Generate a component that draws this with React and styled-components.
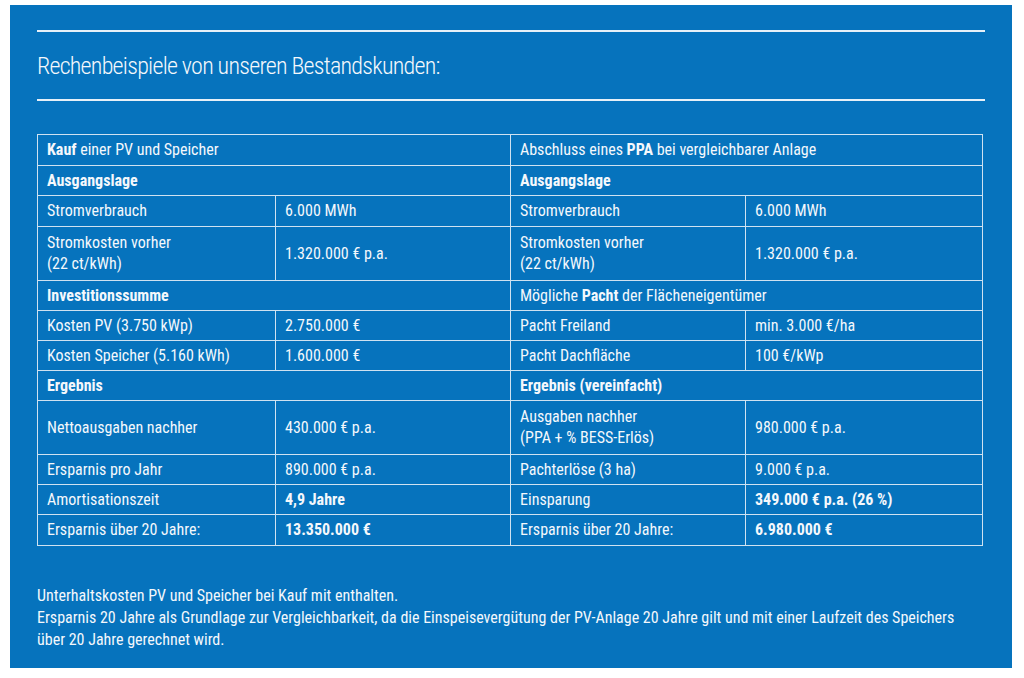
import React from 'react';
import styled, { createGlobalStyle } from 'styled-components';

const Global = createGlobalStyle`
  body {
    margin: 0;
    background: #ffffff;
    font-family: "Roboto Condensed", "Open Sans Condensed", "Noto Sans", sans-serif;
    font-stretch: condensed;
  }
`;

const Page = styled.div`
  padding: 5px 12px 10px 10px;
`;

const Panel = styled.section`
  background: #0673bd;
  color: #f4f8fc;
  height: 663px;
  box-sizing: border-box;
  padding: 25px 27px 0 27px;
`;

const Rule = styled.hr`
  margin: 0;
  border: 0;
  height: 2px;
  background: #e6f0f8;
`;

const Title = styled.h1`
  margin: 0;
  height: 67px;
  display: flex;
  align-items: center;
  font-size: 24px;
  font-weight: 300;
  letter-spacing: -0.75px;
`;

const Table = styled.table`
  margin-top: 33px;
  width: 945px;
  border-collapse: collapse;
  table-layout: fixed;
  font-size: 16px;
  line-height: 21px;
`;

const Row = styled.tr`
  height: ${p => p.$h || 30}px;
`;

const Cell = styled.td`
  border: 1px solid #cfe2f1;
  padding: 2px 9px 3px 9px;
  vertical-align: middle;
  font-weight: ${p => (p.$bold ? 'bold' : 'normal')};
`;

const Notes = styled.div`
  margin-top: 39px;
  font-size: 16px;
  line-height: 22px;
`;

const rows = [
  { h: 31, l: [{ t: <><b>Kauf</b> einer PV und Speicher</>, span: 2 }], r: [{ t: <>Abschluss eines <b>PPA</b> bei vergleichbarer Anlage</>, span: 2 }] },
  { l: [{ t: 'Ausgangslage', span: 2, bold: true }], r: [{ t: 'Ausgangslage', span: 2, bold: true }] },
  { h: 31, l: [{ t: 'Stromverbrauch' }, { t: '6.000 MWh' }], r: [{ t: 'Stromverbrauch' }, { t: '6.000 MWh' }] },
  { h: 54, l: [{ t: <>Stromkosten vorher<br />(22 ct/kWh)</> }, { t: '1.320.000 € p.a.' }], r: [{ t: <>Stromkosten vorher<br />(22 ct/kWh)</> }, { t: '1.320.000 € p.a.' }] },
  { l: [{ t: 'Investitionssumme', span: 2, bold: true }], r: [{ t: <>Mögliche <b>Pacht</b> der Flächeneigentümer</>, span: 2 }] },
  { l: [{ t: 'Kosten PV (3.750 kWp)' }, { t: '2.750.000 €' }], r: [{ t: 'Pacht Freiland' }, { t: 'min. 3.000 €/ha' }] },
  { l: [{ t: 'Kosten Speicher (5.160 kWh)' }, { t: '1.600.000 €' }], r: [{ t: 'Pacht Dachfläche' }, { t: '100 €/kWp' }] },
  { l: [{ t: 'Ergebnis', span: 2, bold: true }], r: [{ t: 'Ergebnis (vereinfacht)', span: 2, bold: true }] },
  { h: 54, l: [{ t: 'Nettoausgaben nachher' }, { t: '430.000 € p.a.' }], r: [{ t: <>Ausgaben nachher<br />(PPA + % BESS-Erlös)</> }, { t: '980.000 € p.a.' }] },
  { l: [{ t: 'Ersparnis pro Jahr' }, { t: '890.000 € p.a.' }], r: [{ t: 'Pachterlöse (3 ha)' }, { t: '9.000 € p.a.' }] },
  { l: [{ t: 'Amortisationszeit' }, { t: '4,9 Jahre', bold: true }], r: [{ t: 'Einsparung' }, { t: '349.000 € p.a. (26 %)', bold: true }] },
  { h: 31, l: [{ t: 'Ersparnis über 20 Jahre:' }, { t: '13.350.000 €', bold: true }], r: [{ t: 'Ersparnis über 20 Jahre:' }, { t: '6.980.000 €', bold: true }] },
];

export default function App() {
  return (
    <Page>
      <Global />
      <Panel>
        <Rule />
        <Title>Rechenbeispiele von unseren Bestandskunden:</Title>
        <Rule />
        <Table>
          <colgroup>
            <col style={{ width: 238 }} />
            <col style={{ width: 235 }} />
            <col style={{ width: 235 }} />
            <col style={{ width: 237 }} />
          </colgroup>
          <tbody>
            {rows.map((row, i) => (
              <Row key={i} $h={row.h}>
                {[...row.l, ...row.r].map((c, j) => (
                  <Cell key={j} colSpan={c.span || 1} $bold={c.bold}>{c.t}</Cell>
                ))}
              </Row>
            ))}
          </tbody>
        </Table>
        <Notes>
          Unterhaltskosten PV und Speicher bei Kauf mit enthalten.<br />
          Ersparnis 20 Jahre als Grundlage zur Vergleichbarkeit, da die Einspeisevergütung der PV-Anlage 20 Jahre gilt und mit einer Laufzeit des Speichers<br />
          über 20 Jahre gerechnet wird.
        </Notes>
      </Panel>
    </Page>
  );
}
